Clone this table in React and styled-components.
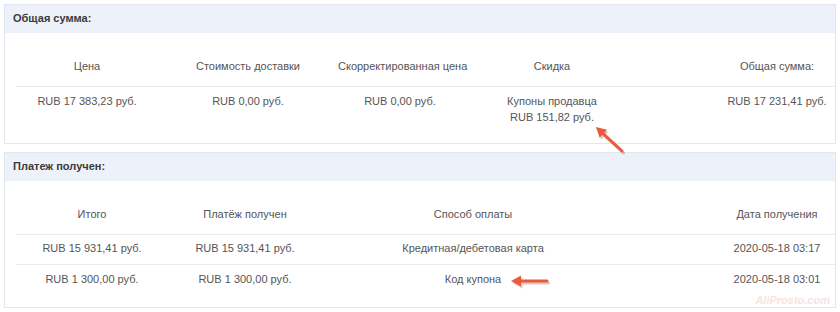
import styled, { createGlobalStyle } from "styled-components";

const GlobalStl = createGlobalStyle`
  body {
    margin: 0;
    background: #fff;
    font-family: "Liberation Sans", Arial, sans-serif;
  }
`

const summaryCols = "142px 180px 124px 180px 1fr 116px"
const paymentCols = "152px 154px 302px 1fr 116px"

const summary = {
  head: ["Цена", "Стоимость доставки", "Скорректированная цена", "Скидка", "", "Общая сумма:"],
  rows: [
    ["RUB 17 383,23 руб.", "RUB 0,00 руб.", "RUB 0,00 руб.", ["Купоны продавца", "RUB 151,82 руб."], "", "RUB 17 231,41 руб."],
  ],
}

const payments = {
  head: ["Итого", "Платёж получен", "Способ оплаты", "", "Дата получения"],
  rows: [
    ["RUB 15 931,41 руб.", "RUB 15 931,41 руб.", "Кредитная/дебетовая карта", "", "2020-05-18 03:17"],
    ["RUB 1 300,00 руб.", "RUB 1 300,00 руб.", "Код купона", "", "2020-05-18 03:01"],
  ],
}

const Cell = ({ value }) => {
  if (Array.isArray(value)) {
    return <CellStl>{value.map((line) => <div key={line}>{line}</div>)}</CellStl>
  }
  return <CellStl>{value}</CellStl>
}

const Arrow = ({ x1, y1, x2, y2 }) => {
  // head at x2,y2
  const dx = x2 - x1
  const dy = y2 - y1
  const len = Math.hypot(dx, dy)
  const ux = dx / len
  const uy = dy / len
  const hl = 10
  const hw = 5.5
  const bx = x2 - ux * hl
  const by = y2 - uy * hl
  const p1 = `${bx - uy * hw},${by + ux * hw}`
  const p2 = `${bx + uy * hw},${by - ux * hw}`
  return (
    <g>
      <g transform="translate(1.5,2)" opacity="0.25">
        <line x1={x1} y1={y1} x2={bx} y2={by} stroke="#7a3020" strokeWidth="3" strokeLinecap="round" />
        <polygon points={`${x2},${y2} ${p1} ${p2}`} fill="#7a3020" />
      </g>
      <line x1={x1} y1={y1} x2={bx} y2={by} stroke="#ea5a3b" strokeWidth="3" strokeLinecap="round" />
      <polygon points={`${x2},${y2} ${p1} ${p2}`} fill="#ea5a3b" />
    </g>
  )
}

export default function App() {
  return (
    <PageStl>
      <GlobalStl />

      <PanelStl>
        <PanelHeaderStl>Общая сумма:</PanelHeaderStl>
        <TableStl>
          <RowStl $cols={summaryCols} $pt={25} $pb={12} $line>
            {summary.head.map((h, i) => <Cell key={i} value={h} />)}
          </RowStl>
          {summary.rows.map((row, r) => (
            <RowStl key={r} $cols={summaryCols} $pt={6} $pb={18}>
              {row.map((v, i) => <Cell key={i} value={v} />)}
            </RowStl>
          ))}
        </TableStl>
      </PanelStl>

      <PanelStl>
        <PanelHeaderStl>Платеж получен:</PanelHeaderStl>
        <TableStl>
          <RowStl $cols={paymentCols} $pt={25} $pb={12} $line>
            {payments.head.map((h, i) => <Cell key={i} value={h} />)}
          </RowStl>
          <RowStl $cols={paymentCols} $pt={5} $pb={8} $line>
            {payments.rows[0].map((v, i) => <Cell key={i} value={v} />)}
          </RowStl>
          <RowStl $cols={paymentCols} $pt={6} $pb={20}>
            {payments.rows[1].map((v, i) => <Cell key={i} value={v} />)}
          </RowStl>
        </TableStl>
      </PanelStl>

      <OverlayStl width="840" height="312" viewBox="0 0 840 312">
        <Arrow x1={622} y1={151} x2={596} y2={127} />
        <Arrow x1={547} y1={281} x2={511} y2={281} />
      </OverlayStl>

      <WatermarkStl>AliProsto.com</WatermarkStl>
    </PageStl>
  )
}


const PageStl = styled.div`
  position: relative;
  width: 840px;
  height: 312px;
  padding: 4px 4px 0 4px;
  box-sizing: border-box;
  display: flex;
  flex-direction: column;
  gap: 8px;
`

const PanelStl = styled.div`
  border: 1px solid #e1e7ef;
  background: #fff;
`

const PanelHeaderStl = styled.div`
  height: 28px;
  line-height: 27px;
  padding-left: 8px;
  background: #edf2fa;
  font-size: 11px;
  font-weight: bold;
  color: #3a3a3a;
`

const TableStl = styled.div`
  padding-left: 11px;
`

const RowStl = styled.div`
  display: grid;
  grid-template-columns: ${(p) => p.$cols};
  padding-top: ${(p) => p.$pt}px;
  padding-bottom: ${(p) => p.$pb}px;
  border-bottom: ${(p) => (p.$line ? "1px solid #e6ebf1" : "none")};
`

const CellStl = styled.div`
  text-align: center;
  font-size: 11px;
  line-height: 16px;
  color: #555;
  white-space: nowrap;
`

const OverlayStl = styled.svg`
  position: absolute;
  left: 0;
  top: 0;
  pointer-events: none;
`

const WatermarkStl = styled.div`
  position: absolute;
  right: 10px;
  top: 294px;
  font-size: 11px;
  font-style: italic;
  font-weight: bold;
  color: #f8e2e2;
`
